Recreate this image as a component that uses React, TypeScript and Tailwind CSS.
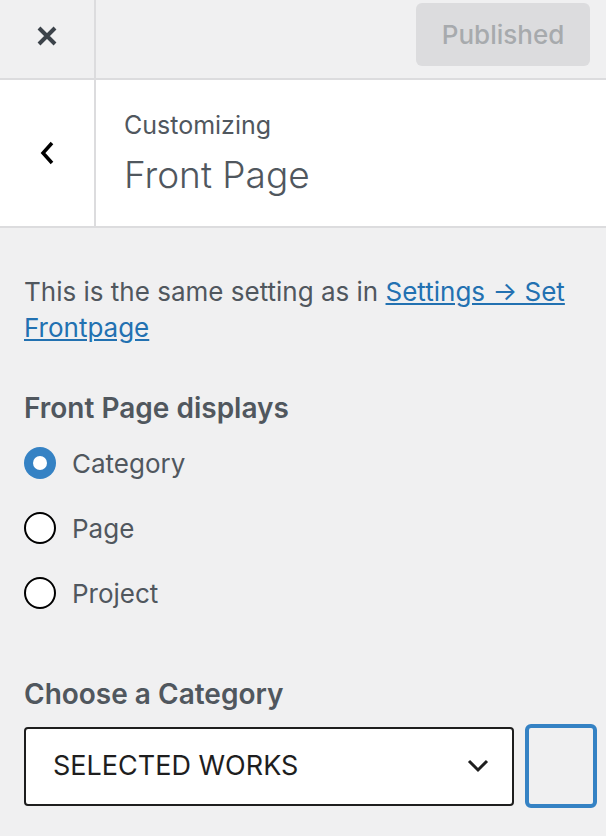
export default function App() {
  const options = ["Category", "Page", "Project"];
  return (
    <div className="w-[606px] h-[836px] overflow-hidden bg-[#f0f0f1] font-['Inter',sans-serif]">
      <div className="flex h-[80px] border-b-2 border-[#dcdcde]">
        <div className="w-[96px] flex items-center justify-center border-r-2 border-[#dcdcde] pb-[6px]">
          <svg width="22" height="22" viewBox="0 0 22 22">
            <path d="M3 3 L19 19 M19 3 L3 19" stroke="#3c434a" strokeWidth="4" />
          </svg>
        </div>
        <div className="flex-1 flex justify-end items-start pt-[3px] pr-[16px]">
          <div className="w-[174px] h-[63px] rounded-[6px] bg-[#dcdcde] flex items-center justify-center text-[26px] font-medium text-[#a7aaad]">
            Published
          </div>
        </div>
      </div>
      <div className="flex h-[148px] bg-white border-b-2 border-[#dcdcde]">
        <div className="w-[96px] flex items-center justify-center border-r-2 border-[#dcdcde]">
          <svg width="18" height="28" viewBox="0 0 18 28">
            <path d="M14 4 L5 14 L14 24" stroke="#000" strokeWidth="3.5" fill="none" />
          </svg>
        </div>
        <div className="flex-1 pl-[28px] pt-[29px]">
          <div className="text-[25px] leading-[32px] text-[#50575e]">Customizing</div>
          <div className="text-[37px] leading-[48px] font-light text-[#50575e] mt-[10px]">Front Page</div>
        </div>
      </div>
      <div className="px-[24px] pt-[46px]">
        <p className="text-[26px] leading-[36px] text-[#50575e]">
          This is the same setting as in{" "}
          <a href="#" className="text-[#2271b1] underline">
            Settings → Set Frontpage
          </a>
        </p>
        <div className="mt-[44px] text-[28px] leading-[36px] font-semibold text-[#50575e]">Front Page displays</div>
        <div className="mt-[19px] flex flex-col gap-[29px]">
          {options.map((o, i) => (
            <div key={o} className="flex items-center h-[36px]">
              {i === 0 ? (
                <span className="w-[32px] h-[32px] rounded-full bg-[#3582c4] flex items-center justify-center">
                  <span className="w-[14px] h-[14px] rounded-full bg-white" />
                </span>
              ) : (
                <span className="w-[32px] h-[32px] rounded-full border-2 border-black bg-white" />
              )}
              <span className="ml-[16px] text-[26px] text-[#50575e]">{o}</span>
            </div>
          ))}
        </div>
        <div className="mt-[65px] text-[28px] leading-[36px] font-semibold text-[#50575e]">Choose a Category</div>
        <div className="mt-[12px] flex items-center gap-[11px]">
          <div className="w-[490px] shrink-0 h-[79px] bg-white border-2 border-[#1e1e1e] rounded-[4px] flex items-center justify-between pl-[27px] pr-[22px]">
            <span className="text-[27px] text-[#1e1e1e]">SELECTED WORKS</span>
            <svg width="24" height="16" viewBox="0 0 24 16">
              <path d="M3 3 L12 12 L21 3" stroke="#1e1e1e" strokeWidth="3" fill="none" />
            </svg>
          </div>
          <div className="w-[72px] shrink-0 h-[84px] border-4 border-[#3582c4] rounded-[6px]" />
        </div>
      </div>
    </div>
  );
}
